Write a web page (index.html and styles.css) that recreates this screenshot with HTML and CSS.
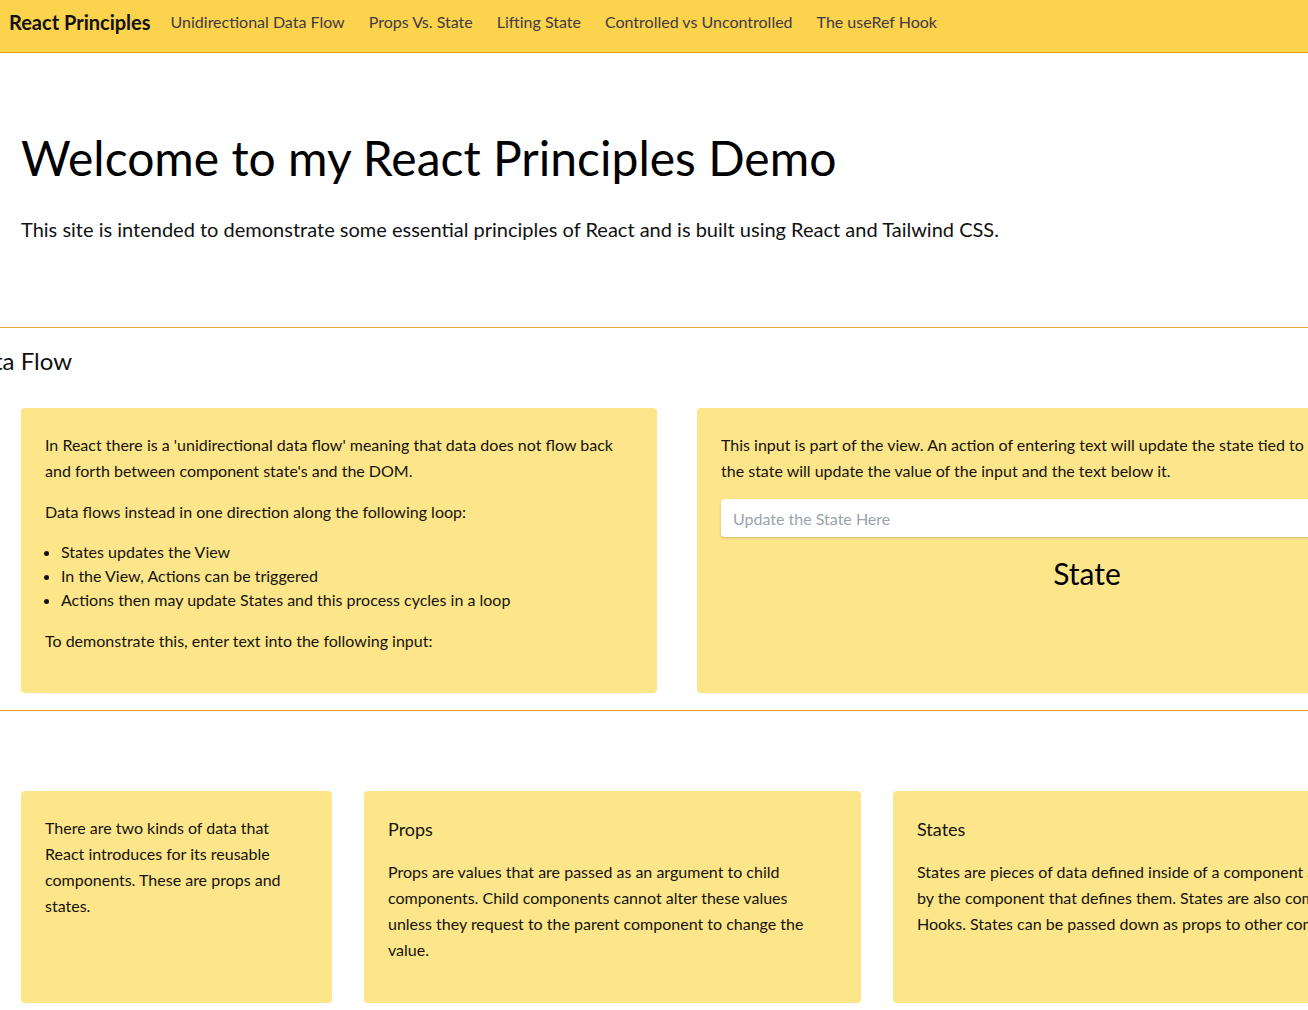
FILE: index.html
```html
<!DOCTYPE html>
<html lang="en">
<head>
<meta charset="utf-8">
<title>React Principles</title>
<link rel="stylesheet" href="styles.css">
</head>
<body>
<nav class="navbar">
  <span class="brand">React Principles</span>
  <div class="nav-links">
    <a href="#">Unidirectional Data Flow</a>
    <a href="#">Props Vs. State</a>
    <a href="#">Lifting State</a>
    <a href="#">Controlled vs Uncontrolled</a>
    <a href="#">The useRef Hook</a>
  </div>
</nav>

<header class="intro">
  <h1>Welcome to my React Principles Demo</h1>
  <p>This site is intended to demonstrate some essential principles of React and is built using React and Tailwind CSS.</p>
</header>

<div class="divider divider-light"></div>

<section class="section">
  <div class="section-title-wrap">
    <h2 class="section-title">Unidirectional Data Flow</h2>
  </div>
  <div class="row row-flow">
    <div class="card card-explain">
      <p>In React there is a 'unidirectional data flow' meaning that data does not flow back and forth between component state's and the DOM.</p>
      <p>Data flows instead in one direction along the following loop:</p>
      <ul>
        <li>States updates the View</li>
        <li>In the View, Actions can be triggered</li>
        <li>Actions then may update States and this process cycles in a loop</li>
      </ul>
      <p>To demonstrate this, enter text into the following input:</p>
    </div>
    <div class="card card-demo">
      <p>This input is part of the view. An action of entering text will update the state tied to it, and<br>the state will update the value of the input and the text below it.</p>
      <input class="state-input" type="text" placeholder="Update the State Here">
      <div class="state-output">State</div>
    </div>
  </div>
</section>

<div class="divider"></div>

<section class="section section-props">
  <div class="row row-props">
    <div class="card card-intro">
      <p>There are two kinds of data that React introduces for its reusable components. These are props and states.</p>
    </div>
    <div class="card card-props">
      <h3 class="card-title">Props</h3>
      <p>Props are values that are passed as an argument to child components. Child components cannot alter these values unless they request to the parent component to change the value.</p>
    </div>
    <div class="card card-states">
      <h3 class="card-title">States</h3>
      <p>States are pieces of data defined inside of a component and can only be changed<br>by the component that defines them. States are also commonly created with React<br>Hooks. States can be passed down as props to other components.</p>
    </div>
  </div>
</section>
</body>
</html>
```
FILE: styles.css
```css
html, body {
  margin: 0;
  padding: 0;
}
body {
  font-family: Lato, "Open Sans", sans-serif;
  color: #111;
  background: #fff;
  overflow: hidden;
  width: 1308px;
}

/* navbar */
.navbar {
  display: flex;
  align-items: center;
  gap: 20px;
  height: 53px;
  box-sizing: border-box;
  padding: 0 9px 8px;
  background: #fcd34d;
  border-bottom: 1px solid #f59e0b;
}
.brand {
  font-size: 20px;
  line-height: 28px;
  font-weight: 700;
  color: #111;
}
.nav-links {
  display: flex;
  gap: 24px;
}
.nav-links a {
  font-size: 16px;
  line-height: 24px;
  color: #3f3a44;
  text-decoration: none;
}

/* intro */
.intro {
  padding: 0 21px;
}
.intro h1 {
  margin: 81px 0 33px;
  font-size: 48px;
  line-height: 48px;
  font-weight: 400;
  color: #000;
}
.intro p {
  margin: 0;
  font-size: 20px;
  line-height: 28px;
  color: #111;
}

.divider {
  height: 1px;
  background: #f59e0b;
}
.divider-light {
  margin-top: 84px;
  background: #e8a73c;
}

/* section */
.section-title-wrap {
  display: flex;
  justify-content: flex-end;
  width: 72px;
  margin-top: 17px;
}
.section-title {
  margin: 0;
  font-size: 24px;
  line-height: 32px;
  font-weight: 400;
  white-space: nowrap;
  color: #111;
}

.row {
  display: flex;
  align-items: stretch;
  padding-left: 21px;
}
.row-flow {
  gap: 40px;
  margin-top: 31px;
  margin-bottom: 17px;
}
.row-props {
  gap: 32px;
  margin-top: 80px;
}

.card {
  flex: none;
  box-sizing: border-box;
  background: #fde68a;
  border-radius: 4px;
  padding: 24px;
  font-size: 16px;
  color: #15130f;
}
.row-props .card {
  padding-bottom: 25px;
}
.card p {
  margin: 0 0 15px;
  line-height: 26px;
}
.card ul {
  margin: 0 0 16px;
  padding-left: 16px;
}
.card li {
  line-height: 24px;
}

.card-explain { width: 636px; }
.card-demo { width: 780px; }
.card-intro { width: 311px; }
.card-props { width: 497px; padding-right: 40px; }
.card-states { width: 760px; }

.card-title {
  margin: 0 0 16px;
  font-size: 18px;
  line-height: 28px;
  font-weight: 400;
  color: #15130f;
}

.state-input {
  display: block;
  width: 100%;
  box-sizing: border-box;
  height: 38px;
  margin-top: 1px;
  padding: 0 12px;
  border: 0;
  border-radius: 4px;
  background: #fff;
  box-shadow: 0 1px 3px rgba(0, 0, 0, 0.12), 0 1px 2px rgba(0, 0, 0, 0.08);
  font-family: Lato, "Open Sans", sans-serif;
  font-size: 16px;
  color: #111;
}
.state-input::placeholder {
  color: #9ca3af;
}
.state-output {
  margin-top: 18px;
  text-align: center;
  font-size: 30px;
  line-height: 36px;
  color: #000;
}
```
